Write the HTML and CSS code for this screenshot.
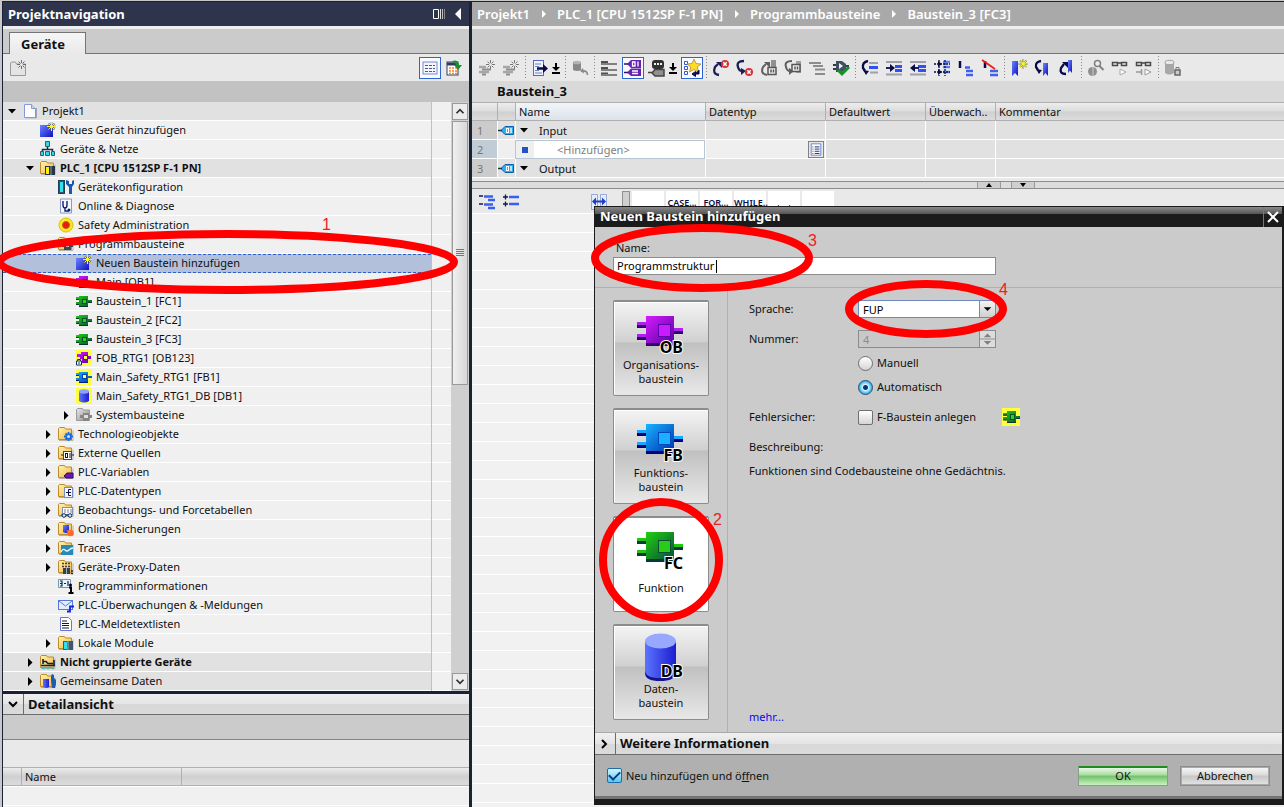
FILE: index.html
```html
<!DOCTYPE html>
<html lang="de">
<head>
<meta charset="utf-8">
<title>Projekt1 – Baustein_3 [FC3]</title>
<link rel="stylesheet" href="styles.css">
</head>
<body>
<svg class="sprite" aria-hidden="true">
  <defs>
    <linearGradient id="g-folder" x1="0" y1="0" x2="1" y2="1"><stop offset="0" stop-color="#fff3b0"/><stop offset="1" stop-color="#f0b848"/></linearGradient>
    <linearGradient id="g-blue" x1="0" y1="0" x2="1" y2="1"><stop offset="0" stop-color="#6a86ff"/><stop offset="1" stop-color="#1010c0"/></linearGradient>
    <linearGradient id="g-ob" x1="0" y1="0" x2="1" y2="1"><stop offset="0" stop-color="#d41cff"/><stop offset="1" stop-color="#5c00a0"/></linearGradient>
    <linearGradient id="g-fb" x1="0" y1="0" x2="1" y2="1"><stop offset="0" stop-color="#18b4ff"/><stop offset="1" stop-color="#0030b0"/></linearGradient>
    <linearGradient id="g-fc" x1="0" y1="0" x2="1" y2="1"><stop offset="0" stop-color="#20d010"/><stop offset="1" stop-color="#084c38"/></linearGradient>
    <linearGradient id="g-gray" x1="0" y1="0" x2="1" y2="1"><stop offset="0" stop-color="#e8e8e8"/><stop offset="1" stop-color="#8c8c8c"/></linearGradient>
    <linearGradient id="g-db" x1="0" y1="0" x2="1" y2="0"><stop offset="0" stop-color="#5c74ff"/><stop offset="1" stop-color="#1c1cd0"/></linearGradient>
  </defs>

  <symbol id="down" viewBox="0 0 16 16"><path d="M4 6h8l-4 4.500z"/></symbol>
  <symbol id="right" viewBox="0 0 16 16"><path d="M6 4l4.500 4.500L6 13z"/></symbol>
  <symbol id="folder" viewBox="0 0 16 16"><path d="M.5 13.500v-11l1-1h5l1 1.500h6v10.500z" fill="url(#g-folder)" stroke="#c08a28"/><path d="M1 14.500h14v-10" fill="none" stroke="#b8b0a0"/></symbol>
  <symbol id="star" viewBox="0 0 16 16"><path d="M11.500 0v9M7 4.500h9M8.500 1.500l6 6M14.500 1.500l-6 6" stroke="#505068" stroke-width="1.500"/><path d="M11.500 0v9M7 4.500h9M8.500 1.500l6 6M14.500 1.500l-6 6" stroke="#f8f820" stroke-width="1"/></symbol>
  <symbol id="page" viewBox="0 0 16 16"><path d="M3 14.500h11V5" fill="none" stroke="#8890b8" stroke-width="1.500"/><path d="M2.500 1.500h7l4 4v9h-11z" fill="#fbfcff" stroke="#8898dc"/><path d="M9.500 1.500v4h4" fill="#c8d4ff" stroke="#8898dc"/></symbol>
  <symbol id="new" viewBox="0 0 16 16"><rect y="3" width="13" height="12" fill="url(#g-blue)"/><use href="#star"/></symbol>
  <symbol id="net" viewBox="0 0 16 16"><path d="M7.500 5v4M2.500 11V8.500h10V11" fill="none" stroke="#14304c" stroke-width="1.500"/><g fill="#30d8e8" stroke="#385868"><path d="M5.500.5h4v5h-4zM.5 10.500h3v4h-3zM5.500 10.500h4v4h-4zM11.500 10.500h3v4h-3z"/></g></symbol>
  <symbol id="plc" viewBox="0 0 16 16"><use href="#folder"/><rect x="5" y="6" width="10" height="9" fill="#283448"/><rect x="6" y="7" width="3" height="7" fill="#fff000"/><path d="M11 6v9" stroke="#8898a8"/></symbol>
  <symbol id="cfg" viewBox="0 0 16 16"><rect x=".5" y="1.500" width="6" height="13" fill="#385068" stroke="#204050"/><rect x="2" y="3" width="3" height="10" fill="#30e0f0"/><path d="M8 1v4l3 3v7h3V8l2-3V1l-2 1v3h-3V2z" fill="#1858b0"/></symbol>
  <symbol id="diag" viewBox="0 0 16 16"><path d="M2.500 1h11v14h-11z" fill="#f5f8ff" stroke="#8898cc"/><path d="M5 3v4q0 3 2 3t2-3V3M7 10v3h4" fill="none" stroke="#10206c" stroke-width="1.400"/><circle cx="11" cy="12" r="1.500" fill="#10206c"/></symbol>
  <symbol id="safe" viewBox="0 0 16 16"><circle cx="8" cy="8" r="7" fill="#ffe820" stroke="#d8c010"/><circle cx="8" cy="8" r="3.500" fill="#e81c10" stroke="#c06010"/></symbol>
  <symbol id="prog" viewBox="0 0 16 16"><use href="#folder"/><path d="M4 8h2V6h7v2h2v3h-2v3H6v-3H4z" fill="#384858"/><rect x="8" y="8" width="3" height="3" fill="#c0c8d0"/></symbol>
  <symbol id="ob" viewBox="0 0 16 16"><path d="M0 4h3V2h9v5h4v3h-4v4H3v-2H0V9h3V7H0z" fill="url(#g-ob)"/><path d="M0 6.500h3M0 11.500h3M3 13.500h9" stroke="#2c0060"/><rect x="6.500" y="5.500" width="4" height="4" fill="#c838ff" stroke="#7000b0"/></symbol>
  <symbol id="fc" viewBox="0 0 16 16"><path d="M0 4h3V3h9v4h4v3h-4v4H3v-2H0V9h3V7H0z" fill="url(#g-fc)"/><path d="M0 6.500h3M0 11.500h3M3 13.500h9M12 9.500h4" stroke="#083828"/><rect x="6.500" y="6.500" width="4" height="4" fill="#28d818" stroke="#085030"/></symbol>
  <symbol id="fob" viewBox="0 0 16 16"><rect width="16" height="16" fill="#ffff40"/><path d="M1 4h4V2h7v4h3v3h-3v4H6V9H4V7H1z" fill="url(#g-ob)"/><rect x="7.500" y="5.500" width="4" height="4" fill="#ffff40" stroke="#7000b0"/><path d="M.5 11h5v4h-5z" fill="#fff" stroke="#103060"/><path d="M1.500 11V9.500h3V11M2 13h2" fill="none" stroke="#103060"/></symbol>
  <symbol id="ffb" viewBox="0 0 16 16"><rect width="16" height="16" fill="#ffff40"/><path d="M0 4h3V3h9v4h4v2h-4v5H3v-2H0V9h3V7H0z" fill="url(#g-fb)"/><path d="M0 6.500h3M0 11.500h3M3 13.500h9" stroke="#002080"/><rect x="6.500" y="5.500" width="4" height="4" fill="#ffff70" stroke="#0040b0"/></symbol>
  <symbol id="ffc" viewBox="0 0 18 18"><rect width="18" height="18" fill="#ffff40"/><path d="M1 5h4V3h9v5h4v3h-4v4H5v-3H1V9h4V8H1z" fill="url(#g-fc)"/><path d="M1 7h4M1 12h4M5 14.500h9M14 10.500h4" stroke="#083828"/><rect x="8.500" y="6.500" width="4" height="5" fill="#28d818" stroke="#085030"/></symbol>
  <symbol id="fdb" viewBox="0 0 16 16"><rect width="16" height="16" fill="#ffff40"/><path d="M3 3v10q5 3 10 0V3z" fill="url(#g-db)"/><ellipse cx="8" cy="3.500" rx="5" ry="2.200" fill="#8ca0ff"/></symbol>
  <symbol id="sys" viewBox="0 0 16 16"><path d="M.5 13.500v-11l1-1h5l1 1.500h6v10.500z" fill="url(#g-gray)" stroke="#9a9a9a"/><path d="M4 8h3V6h6v2h3v3h-3v3H7v-3H4z" fill="#858585"/><rect x="8" y="8" width="4" height="3" fill="#e0e0e0"/></symbol>
  <symbol id="tech" viewBox="0 0 16 16"><use href="#folder"/><path d="M10.500 6v9M6 10.500h9M7.500 7.500l6 6M13.500 7.500l-6 6" stroke="#1868d8" stroke-width="1.800"/><circle cx="10.500" cy="10.500" r="1.500" fill="#d0e4ff"/></symbol>
  <symbol id="src" viewBox="0 0 16 16"><use href="#folder"/><rect x="5.500" y="6.500" width="8" height="8" fill="#fff" stroke="#384870"/><path d="M3 10h2M14 10h2M12 8v5" stroke="#101838"/><rect x="7.500" y="8.500" width="2" height="4" fill="none" stroke="#101838"/></symbol>
  <symbol id="tag" viewBox="0 0 16 16"><use href="#folder"/><path d="M6 12l3-3h6v5H8z" fill="#6a18b0" stroke="#30086c"/></symbol>
  <symbol id="typ" viewBox="0 0 16 16"><use href="#folder"/><rect x="6.500" y="4.500" width="8" height="10" fill="#f4f6ff" stroke="#7888c8"/><path d="M8 9.500h2M13 6.500h-2.500v6H13M10 9.500h3" fill="none" stroke="#101838"/></symbol>
  <symbol id="watch" viewBox="0 0 16 16"><use href="#folder"/><rect x="4.500" y="5.500" width="10" height="7" fill="#fff" stroke="#8090b0"/><path d="M6 8h8M6 10h8" stroke="#707c94" stroke-dasharray="2 1"/><path d="M3 13h11" stroke="#142c60"/><circle cx="6" cy="13.500" r="1.800" fill="#dce8ff" stroke="#142c60"/><circle cx="12" cy="13.500" r="1.800" fill="#dce8ff" stroke="#142c60"/></symbol>
  <symbol id="save" viewBox="0 0 16 16"><use href="#folder"/><path d="M5 4v7q3 2 6 0V4z" fill="url(#g-blue)"/><circle cx="12.500" cy="12" r="3.300" fill="#ff6a20"/><path d="M8 9l4 1v2z" fill="#ff8c30"/></symbol>
  <symbol id="trace" viewBox="0 0 16 16"><use href="#folder"/><rect x="3" y="5" width="12" height="10" fill="#2888b8"/><path d="M3 12q2-4 4-2t4 0 4-2" fill="none" stroke="#e8fcff" stroke-width="1.300"/></symbol>
  <symbol id="proxy" viewBox="0 0 16 16"><use href="#folder"/><path d="M4 4.500h9M4 7.500h9" stroke="#404040" stroke-width="1.500" stroke-dasharray="2 1"/><path d="M5 9h7v6H5z" fill="#384048"/><path d="M8.500 9v6" stroke="#a0a8b0"/><path d="M13 12h2M13 14.500h2" stroke="#202830" stroke-width="1.500"/></symbol>
  <symbol id="info" viewBox="0 0 16 16"><path d="M.5 1.500h12v8H.5z" fill="#e8f4ff" stroke="#7898b0"/><path d="M2 3h2v5H2M6 5.500h2M10 3v5M2 5.500h2" fill="none" stroke="#142838" stroke-width="1.200"/><circle cx="12.500" cy="7" r="1.500"/><path d="M11 9.500h2v5.500M10.500 15h5" fill="none" stroke="#000" stroke-width="2"/></symbol>
  <symbol id="mail" viewBox="0 0 16 16"><rect x=".5" y="3.500" width="14" height="9" fill="#e4ecff" stroke="#5878d8"/><path d="M1 4l6.500 5L14 4" fill="none" stroke="#5878d8"/><path d="M9 14.500h3v-5h4" fill="none" stroke="#1020f0" stroke-width="1.800"/></symbol>
  <symbol id="text" viewBox="0 0 16 16"><path d="M2.500 1.500h8l3 3v10h-11z" fill="#fff" stroke="#6878d0"/><path d="M4 5h5M4 7.500h7M4 9.500h7M4 12h7" stroke="#101838"/></symbol>
  <symbol id="mod" viewBox="0 0 16 16"><use href="#folder"/><rect x="5" y="6" width="10" height="9" fill="#40586c"/><rect x="6" y="7" width="3" height="7" fill="#30e0f0"/><path d="M10 6v9" stroke="#a0b0b8"/></symbol>
  <symbol id="ungr" viewBox="0 0 16 16"><use href="#folder"/><path d="M3 5v5M14 6v5M3 7.500h3l2 2h5M1 11.500h14" fill="none" stroke="#102040" stroke-width="1.600"/><path d="M2 14h3M6.500 14h3M11 14h3" stroke="#50b8c8" stroke-width="2.500"/></symbol>
  <symbol id="shared" viewBox="0 0 16 16"><use href="#folder"/><path d="M3 6v8q3 2 6 0V6z" fill="url(#g-db)"/><path d="M11 3l1-2 2 1v3l2 2v4l-1 4h-3l-1-7z" fill="#1c5cb0"/></symbol>

  <symbol id="t-addrow" viewBox="0 0 18 18"><path d="M1 8h7M1 13h10" stroke="#a6a6a6" stroke-width="2.500"/><path d="M4 10.500h9M4 15.500h4" stroke="#8c8c8c" stroke-width="2.200"/><path d="M12.500 1v9M8 5.500h9M9.500 2.500l6 6M15.500 2.500l-6 6" stroke="#777"/><circle cx="12.500" cy="5.500" r="1.500" fill="#eee"/></symbol>
  <symbol id="t-newfolder" viewBox="0 0 18 18"><path d="M1.500 16.500V4l1-1h4l1 2h9v11.500z" fill="#e4e4e4" stroke="#9a9a9a"/><path d="M12.500 1v9M8 5.500h9M9.500 2.500l6 6M15.500 2.500l-6 6" stroke="#6a6a6a"/><circle cx="12.500" cy="5.500" r="1.500" fill="#eee"/></symbol>
  <symbol id="t-list" viewBox="0 0 18 18"><rect x="2" y="3" width="14" height="12" fill="#f4f6ff" stroke="#7888c8"/><path d="M4 6.500h10M4 9.500h10M4 12.500h10" stroke="#505878" stroke-dasharray="3 1"/></symbol>
  <symbol id="t-export" viewBox="0 0 18 18"><rect x="2" y="3" width="11" height="13" fill="#fff" stroke="#303c60"/><path d="M2 5h11" stroke="#303c60" stroke-width="3"/><path d="M4 9h8M4 12h8M4 14.500h8" stroke="#f08020" stroke-width="1.600" stroke-dasharray="2 1"/><path d="M7 2q6-2 7 4h3l-4 5-4-5h2q-1-3-4-4z" fill="#189030"/></symbol>
  <symbol id="t-goto" viewBox="0 0 18 18"><rect x="2.500" y="1.500" width="10" height="15" fill="#eef2ff" stroke="#5868c0"/><path d="M4 5h6M4 7.500h4M4 11.500h4M4 14h7" stroke="#7080c0"/><path d="M6 8.300h6V5l5 4.500-5 4.500v-3.200H6z" fill="#0a0a48"/></symbol>
  <symbol id="t-caret" viewBox="0 0 10 18"><path d="M3 4h2v4h3L4 12 0 8h3zM0 13h8v2H0z"/></symbol>
  <symbol id="t-dbundo" viewBox="0 0 18 18"><path d="M2 3v8q4 2 8 0V3z" fill="#888"/><ellipse cx="6" cy="3.500" rx="4" ry="1.800" fill="#b4b4b4"/><path d="M16.500 16q0-5-6-4" fill="none" stroke="#888" stroke-width="1.600"/><path d="M12 9l-3 3 4 2.500z" fill="#888"/></symbol>
  <symbol id="t-bars" viewBox="0 0 18 18"><path d="M1 3h7M1 9h7M1 14.500h7" stroke="#505050" stroke-width="2"/><path d="M1 5h16M1 11h16M1 16h16" stroke="#808080" stroke-width="2"/></symbol>
  <symbol id="t-tags" viewBox="0 0 18 18"><path d="M3 5l4-4h10v8H7zM3 13.500l4-4h10V17H7z" fill="#6820b0"/><path d="M0 5h4M0 13.500h4" stroke="#301060" stroke-width="1.500"/><path d="M8.500 3h2.500v4H8.500zM14 2.500v5" fill="none" stroke="#fff" stroke-width="1.300"/><path d="M8 12h6M8 14.500h6" stroke="#fff" stroke-width="1.500"/></symbol>
  <symbol id="t-comment" viewBox="0 0 18 18"><rect x="4" y="1" width="12" height="9" rx="3" fill="#303030"/><path d="M6 5h2M9 5h2M12 5h2" stroke="#eee" stroke-width="2"/><path d="M4 14l3-3.500h9V17H7zM0 13.500h4" fill="#909090" stroke="#444" stroke-width="1.500"/></symbol>
  <symbol id="t-fav" viewBox="0 0 18 18"><path d="M1.500 2.500h3v3h-3zM1.500 7.500h3v3h-3zM1.500 12.500h3v3h-3z" fill="#fff" stroke="#3858c8"/><path d="M11 0l2 4.500 5 .5-3.700 3 1.200 5-4.500-2.500L6.500 13l1.200-5L4 5l5-.5z" fill="#ffdc28" stroke="#a08030" stroke-width=".7"/><path d="M16 11v4h-5M12.500 12.500L9 15l3.500 2.500z" fill="#0a0a48" stroke="#0a0a48"/></symbol>
  <symbol id="t-preverr" viewBox="0 0 18 18"><path d="M7 16q-7-1-4-8l3-3" fill="none" stroke="#182058" stroke-width="2.300"/><path d="M4 3h6v6z" fill="#182058"/><circle cx="13" cy="5" r="4" fill="#d83038"/><path d="M11.300 3.300l3.400 3.400M14.700 3.300l-3.400 3.400" stroke="#fff" stroke-width="1.500"/></symbol>
  <symbol id="t-nexterr" viewBox="0 0 18 18"><path d="M8 2Q0 2 2 8q1 4 4 4" fill="none" stroke="#182058" stroke-width="2.300"/><path d="M5 9l5 3-5 4z" fill="#182058"/><circle cx="13" cy="13" r="4" fill="#d83038"/><path d="M11.300 11.300l3.400 3.400M14.700 11.300l-3.400 3.400" stroke="#fff" stroke-width="1.500"/></symbol>
  <symbol id="t-prevg" viewBox="0 0 18 18"><path d="M7 16q-7-1-4-8l3-3" fill="none" stroke="#606060" stroke-width="2"/><path d="M4 3h6v6z" fill="#606060"/><path d="M11 1h5v8h-5z" fill="#909090"/><path d="M8 8.500h8v7H8zM11 10.500v3M13.500 10.500v3" fill="#eee" stroke="#555" stroke-width="1.500"/></symbol>
  <symbol id="t-nextg" viewBox="0 0 18 18"><path d="M8 2Q0 2 2 8q1 4 4 4" fill="none" stroke="#606060" stroke-width="2"/><path d="M5 9l5 3-5 4z" fill="#606060"/><path d="M12 2h5v12h-5z" fill="#a0a0a0"/><path d="M8 5.500h8v7H8zM11 7.500v3M13.500 7.500v3" fill="#eee" stroke="#555" stroke-width="1.500"/></symbol>
  <symbol id="t-lines" viewBox="0 0 18 18"><path d="M1 4h12M5 7h10M7 10.500h10M7 15h10" stroke="#8c8c8c" stroke-width="2.200"/></symbol>
  <symbol id="t-check" viewBox="0 0 18 18"><path d="M1 6h3M1 10h3M13 7h4" stroke="#303c48" stroke-width="2"/><path d="M4 2h6l4 3v5l-4 3H4z" fill="#405060"/><path d="M7 4l4 3-4 3z" fill="#e8f0f8"/><path d="M6 11l4 4 7-7" fill="none" stroke="#189028" stroke-width="3"/></symbol>
  <symbol id="t-jump" viewBox="0 0 18 18"><path d="M7 2Q1 3 2 9l2 3" fill="none" stroke="#0a0a48" stroke-width="2.300"/><path d="M2 11l6 1-3 4z" fill="#0a0a48"/><path d="M8 4h9M9 13.500h8" stroke="#a0a0a8" stroke-width="2"/><path d="M8 8.500h9" stroke="#3050f0" stroke-width="3"/></symbol>
  <symbol id="t-in" viewBox="0 0 18 18"><path d="M1 3h16M1 15.500h16" stroke="#a0a0a8" stroke-width="2"/><path d="M10 7.500h7M10 11.500h7" stroke="#3050f0" stroke-width="2.800"/><path d="M1 9h5" stroke="#0a0a48" stroke-width="1.800"/><path d="M5 5l5 4-5 4z" fill="#0a0a48"/></symbol>
  <symbol id="t-out" viewBox="0 0 18 18"><path d="M1 3h16M1 15.500h16" stroke="#a0a0a8" stroke-width="2"/><path d="M9 7.500h8M9 11.500h8" stroke="#3050f0" stroke-width="2.800"/><path d="M5 9h5" stroke="#0a0a48" stroke-width="1.800"/><path d="M6 5L1 9l5 4z" fill="#0a0a48"/></symbol>
  <symbol id="t-align" viewBox="0 0 18 18"><path d="M10 3h7M10 8h7M10 13h7" stroke="#6080f0" stroke-width="2.500"/><path d="M1 5h16M1 13h16M6 1v16M12 1v16" stroke="#0a0a48" stroke-width="1.300" stroke-dasharray="2 1"/><path d="M5 2l4 3-4 3zM5 10l4 3-4 3z" fill="#0a0a48"/></symbol>
  <symbol id="t-mark" viewBox="0 0 18 18"><path d="M3 2v7" stroke="#0a0a48" stroke-width="2.500"/><path d="M8 8.500h5M9 12h7M9 16h7" stroke="#4060e8" stroke-width="2.500"/></symbol>
  <symbol id="t-unmark" viewBox="0 0 18 18"><path d="M4 2v7" stroke="#0a0a48" stroke-width="2.500"/><path d="M9 12h8M9 16h8" stroke="#4060e8" stroke-width="2.500"/><path d="M1 1l13 9" stroke="#e82018" stroke-width="1.800"/></symbol>
  <symbol id="t-bmnew" viewBox="0 0 18 18"><path d="M2 2h6v15l-3-3-3 3z" fill="url(#g-blue)"/><use href="#star" x="1" width="17" height="17"/></symbol>
  <symbol id="t-bmnext" viewBox="0 0 18 18"><path d="M7 2Q1 3 2 8l2 3" fill="none" stroke="#0a0a48" stroke-width="2.300"/><path d="M2 10l6 1-3 4z" fill="#0a0a48"/><path d="M9 4h5v13l-2.500-3L9 17z" fill="url(#g-blue)"/></symbol>
  <symbol id="t-bmprev" viewBox="0 0 18 18"><path d="M8 15q-7 0-5-6l3-4" fill="none" stroke="#0a0a48" stroke-width="2.300"/><path d="M4 3h6v6z" fill="#0a0a48"/><path d="M10 1h4v13l-2-2.500-2 2.500z" fill="url(#g-blue)"/></symbol>
  <symbol id="t-find" viewBox="0 0 18 18"><circle cx="5.500" cy="12.500" r="4.500" fill="#909090"/><path d="M6 8v9" stroke="#ccc"/><circle cx="10.500" cy="4.500" r="3" fill="#eee" stroke="#808080" stroke-width="1.500"/><path d="M12.500 7l4 4" stroke="#808080" stroke-width="2"/></symbol>
  <symbol id="t-glass" viewBox="0 0 18 18"><path d="M1.500 3.500h5v3h-5zM10.500 3.500h5v3h-5zM6.500 4h4" fill="none" stroke="#484848" stroke-width="1.500"/><path d="M9 10l6 3-6 3z" fill="#fff" stroke="#aaa"/></symbol>
  <symbol id="t-glass2" viewBox="0 0 18 18"><path d="M1.500 3.500h5v3h-5zM10.500 3.500h5v3h-5zM6.500 4h4" fill="none" stroke="#484848" stroke-width="1.500"/><path d="M1 13h6M6.500 10v6" stroke="#999" stroke-width="1.500"/><path d="M10 10l6 3-6 3z" fill="#fff" stroke="#999"/></symbol>
  <symbol id="t-dblock" viewBox="0 0 18 18"><path d="M1 3v11q4.500 3 9 0V3z" fill="#a8a8a8"/><ellipse cx="5.500" cy="3.500" rx="4.500" ry="2.200" fill="#e8e8e8" stroke="#999"/><path d="M11 11h5v5h-5z" fill="#ccc" stroke="#666" stroke-width="1.500"/><path d="M12 10V8.500h3V10" fill="none" stroke="#777"/></symbol>
  <symbol id="t-tree" viewBox="0 0 18 18"><path d="M1 3h4M1 11h4" stroke="#101848" stroke-width="1.300"/><path d="M6 3.500h9M10 7h7M6 11.500h9M10 15h7" stroke="#3860f0" stroke-width="2.500"/></symbol>
  <symbol id="t-plus" viewBox="0 0 18 18"><path d="M1 4h5M3.500 1.500v5M1 11h5M3.500 8.500v5" stroke="#101848" stroke-width="1.300"/><path d="M7 4h10M7 11h10" stroke="#3860f0" stroke-width="2.500"/></symbol>
  <symbol id="t-split" viewBox="0 0 18 18"><path d="M1.500 1.500h6v15h-6zM10.500 1.500h6v15h-6z" fill="#e4ecff" stroke="#98a8d8"/><path d="M2 8.500l4-4v3h6v-3l4 4-4 4v-3H6v3z" fill="#1c40c8"/></symbol>
  <symbol id="var" viewBox="0 0 16 16"><path d="M3 8.500L7 4.500h8.500v8H7z" fill="#28b0f0" stroke="#0860b0"/><path d="M0 8.500h4" stroke="#203050" stroke-width="1.500"/><rect x="8.500" y="6.500" width="2" height="4" fill="none" stroke="#fff"/><path d="M13 6v5" stroke="#fff" stroke-width="1.300"/></symbol>
</svg>

<div class="app">
  <aside class="nav">
    <header class="nav-head">
      <h1>Projektnavigation</h1>
      <svg class="head-icons" viewBox="0 0 30 14" width="30" height="14"><path d="M.5 2.500h5v9h-5z" fill="none" stroke="#fff"/><path d="M7.500 2v10" stroke="#ddd"/><path d="M9.500 2v10" stroke="#bbb"/><path d="M11.500 2v10" stroke="#888"/><path d="M28 1v12l-6-6z" fill="#fff"/></svg>
    </header>
    <div class="tabs"><button class="tab" type="button">Geräte</button></div>
    <div class="nav-tools">
      <button type="button" class="tool" aria-label="Neuer Ordner"><svg><use href="#t-newfolder"/></svg></button>
      <button type="button" class="tool boxed push" aria-label="Liste"><svg><use href="#t-list"/></svg></button>
      <button type="button" class="tool" aria-label="Exportieren"><svg><use href="#t-export"/></svg></button>
    </div>
    <div class="band"></div>
    <div class="tree-wrap">
      <ul class="tree">
        <li class="l0 dark"><svg><use href="#down"/></svg><svg><use href="#page"/></svg><span>Projekt1</span></li>
        <li class="l1"><i></i><svg><use href="#new"/></svg><span>Neues Gerät hinzufügen</span></li>
        <li class="l1"><i></i><svg><use href="#net"/></svg><span>Geräte &amp; Netze</span></li>
        <li class="l1 dark bold"><svg><use href="#down"/></svg><svg><use href="#plc"/></svg><span>PLC_1 [CPU 1512SP F-1 PN]</span></li>
        <li class="l2"><i></i><svg><use href="#cfg"/></svg><span>Gerätekonfiguration</span></li>
        <li class="l2"><i></i><svg><use href="#diag"/></svg><span>Online &amp; Diagnose</span></li>
        <li class="l2"><i></i><svg><use href="#safe"/></svg><span>Safety Administration</span></li>
        <li class="l2"><svg><use href="#down"/></svg><svg><use href="#prog"/></svg><span>Programmbausteine</span></li>
        <li class="l3 sel"><i></i><svg><use href="#new"/></svg><span>Neuen Baustein hinzufügen</span></li>
        <li class="l3"><i></i><svg><use href="#ob"/></svg><span>Main [OB1]</span></li>
        <li class="l3"><i></i><svg><use href="#fc"/></svg><span>Baustein_1 [FC1]</span></li>
        <li class="l3"><i></i><svg><use href="#fc"/></svg><span>Baustein_2 [FC2]</span></li>
        <li class="l3"><i></i><svg><use href="#fc"/></svg><span>Baustein_3 [FC3]</span></li>
        <li class="l3"><i></i><svg><use href="#fob"/></svg><span>FOB_RTG1 [OB123]</span></li>
        <li class="l3"><i></i><svg><use href="#ffb"/></svg><span>Main_Safety_RTG1 [FB1]</span></li>
        <li class="l3"><i></i><svg><use href="#fdb"/></svg><span>Main_Safety_RTG1_DB [DB1]</span></li>
        <li class="l3"><svg><use href="#right"/></svg><svg><use href="#sys"/></svg><span>Systembausteine</span></li>
        <li class="l2"><svg><use href="#right"/></svg><svg><use href="#tech"/></svg><span>Technologieobjekte</span></li>
        <li class="l2"><svg><use href="#right"/></svg><svg><use href="#src"/></svg><span>Externe Quellen</span></li>
        <li class="l2"><svg><use href="#right"/></svg><svg><use href="#tag"/></svg><span>PLC-Variablen</span></li>
        <li class="l2"><svg><use href="#right"/></svg><svg><use href="#typ"/></svg><span>PLC-Datentypen</span></li>
        <li class="l2"><svg><use href="#right"/></svg><svg><use href="#watch"/></svg><span>Beobachtungs- und Forcetabellen</span></li>
        <li class="l2"><svg><use href="#right"/></svg><svg><use href="#save"/></svg><span>Online-Sicherungen</span></li>
        <li class="l2"><svg><use href="#right"/></svg><svg><use href="#trace"/></svg><span>Traces</span></li>
        <li class="l2"><svg><use href="#right"/></svg><svg><use href="#proxy"/></svg><span>Geräte-Proxy-Daten</span></li>
        <li class="l2"><i></i><svg><use href="#info"/></svg><span>Programminformationen</span></li>
        <li class="l2"><i></i><svg><use href="#mail"/></svg><span>PLC-Überwachungen &amp; -Meldungen</span></li>
        <li class="l2"><i></i><svg><use href="#text"/></svg><span>PLC-Meldetextlisten</span></li>
        <li class="l2"><svg><use href="#right"/></svg><svg><use href="#mod"/></svg><span>Lokale Module</span></li>
        <li class="l1 dark bold"><svg><use href="#right"/></svg><svg><use href="#ungr"/></svg><span>Nicht gruppierte Geräte</span></li>
        <li class="l1 dark"><svg><use href="#right"/></svg><svg><use href="#shared"/></svg><span>Gemeinsame Daten</span></li>
      </ul>
      <div class="status-col"></div>
      <div class="scroll">
        <button type="button" aria-label="Nach oben"><svg viewBox="0 0 16 16"><path d="M4 10l4-4 4 4"/></svg></button>
        <div class="track"><div class="thumb"></div></div>
        <button type="button" aria-label="Nach unten"><svg viewBox="0 0 16 16"><path d="M4 6l4 4 4-4"/></svg></button>
      </div>
    </div>
    <section class="detail">
      <div class="fold"><svg viewBox="0 0 20 20"><path d="M6 8l4 4 4-4"/></svg><h2>Detailansicht</h2></div>
      <div class="detail-band"></div>
      <div class="detail-tools"></div>
      <div class="detail-cols"><span></span><span>Name</span><span></span></div>
      <div class="detail-rows"></div>
    </section>
  </aside>

  <main class="main">
    <nav class="crumbs"><span>Projekt1</span><b></b><span>PLC_1 [CPU 1512SP F-1 PN]</span><b></b><span>Programmbausteine</span><b></b><span>Baustein_3 [FC3]</span></nav>
    <div class="main-band"></div>
    <div class="toolbar">
      <button type="button" class="tool" aria-label="Zeile einfügen"><svg><use href="#t-addrow"/></svg></button>
      <button type="button" class="tool" aria-label="Zeile hinzufügen"><svg><use href="#t-addrow"/></svg></button>
      <i class="sep"></i>
      <button type="button" class="tool" aria-label="Gehe zu"><svg><use href="#t-goto"/></svg></button>
      <svg class="caret"><use href="#t-caret"/></svg>
      <i class="sep"></i>
      <button type="button" class="tool" aria-label="Startwerte"><svg><use href="#t-dbundo"/></svg></button>
      <i class="sep"></i>
      <button type="button" class="tool" aria-label="Netzwerke"><svg><use href="#t-bars"/></svg></button>
      <button type="button" class="tool boxed" aria-label="Operanden"><svg><use href="#t-tags"/></svg></button>
      <button type="button" class="tool" aria-label="Kommentare"><svg><use href="#t-comment"/></svg></button>
      <svg class="caret"><use href="#t-caret"/></svg>
      <button type="button" class="tool boxed" aria-label="Favoriten"><svg><use href="#t-fav"/></svg></button>
      <i class="sep"></i>
      <button type="button" class="tool" aria-label="Voriger Fehler"><svg><use href="#t-preverr"/></svg></button>
      <button type="button" class="tool" aria-label="Nächster Fehler"><svg><use href="#t-nexterr"/></svg></button>
      <button type="button" class="tool" aria-label="Voriger Unterschied"><svg><use href="#t-prevg"/></svg></button>
      <button type="button" class="tool" aria-label="Nächster Unterschied"><svg><use href="#t-nextg"/></svg></button>
      <button type="button" class="tool" aria-label="Aktualisieren"><svg><use href="#t-lines"/></svg></button>
      <button type="button" class="tool" aria-label="Prüfen"><svg><use href="#t-check"/></svg></button>
      <i class="sep"></i>
      <button type="button" class="tool" aria-label="Zu Zeile"><svg><use href="#t-jump"/></svg></button>
      <button type="button" class="tool" aria-label="Einrücken"><svg><use href="#t-in"/></svg></button>
      <button type="button" class="tool" aria-label="Ausrücken"><svg><use href="#t-out"/></svg></button>
      <button type="button" class="tool" aria-label="Formatieren"><svg><use href="#t-align"/></svg></button>
      <button type="button" class="tool" aria-label="Auskommentieren"><svg><use href="#t-mark"/></svg></button>
      <button type="button" class="tool" aria-label="Kommentar entfernen"><svg><use href="#t-unmark"/></svg></button>
      <i class="sep"></i>
      <button type="button" class="tool" aria-label="Lesezeichen"><svg><use href="#t-bmnew"/></svg></button>
      <button type="button" class="tool" aria-label="Nächstes Lesezeichen"><svg><use href="#t-bmnext"/></svg></button>
      <button type="button" class="tool" aria-label="Voriges Lesezeichen"><svg><use href="#t-bmprev"/></svg></button>
      <i class="sep"></i>
      <button type="button" class="tool" aria-label="Aufrufumgebung"><svg><use href="#t-find"/></svg></button>
      <button type="button" class="tool" aria-label="Beobachten"><svg><use href="#t-glass"/></svg></button>
      <button type="button" class="tool" aria-label="Beobachten ab Auswahl"><svg><use href="#t-glass2"/></svg></button>
      <i class="sep"></i>
      <button type="button" class="tool" aria-label="Datenbaustein sperren"><svg><use href="#t-dblock"/></svg></button>
    </div>
    <h2 class="block-title">Baustein_3</h2>
    <table class="iface">
      <colgroup><col class="c-num"><col class="c-tag"><col class="c-name"><col class="c-type"><col class="c-def"><col class="c-mon"><col></colgroup>
      <thead><tr><th></th><th></th><th class="active">Name</th><th>Datentyp</th><th>Defaultwert</th><th>Überwach..</th><th>Kommentar</th></tr></thead>
      <tbody>
        <tr><td class="num">1</td><td class="ic"><svg><use href="#var"/></svg></td><td><div class="cell"><svg><use href="#down"/></svg>Input</div></td><td></td><td></td><td></td><td></td></tr>
        <tr><td class="num on">2</td><td class="light"></td><td class="edit"><div class="cell"><i class="dot"></i><span>&lt;Hinzufügen&gt;</span></div></td><td class="light pick"><button type="button" aria-label="Datentyp wählen"><svg viewBox="0 0 16 16"><path d="M2.500 1.500h11v13h-11z" fill="#fff" stroke="#5878d8"/><path d="M4 5h1M4 7.500h1M4 10h1M4 12.500h1M6.500 5H12M6.500 7.500H12M6.500 10H12M6.500 12.500H12" stroke="#101848"/></svg></button></td><td></td><td></td><td></td></tr>
        <tr><td class="num">3</td><td class="ic"><svg><use href="#var"/></svg></td><td><div class="cell"><svg><use href="#down"/></svg>Output</div></td><td></td><td></td><td></td><td></td></tr>
      </tbody>
    </table>
    <div class="splitter"><span><svg viewBox="0 0 6 4"><path d="M3 0l3 4H0z"/></svg></span><span><svg viewBox="0 0 6 4"><path d="M0 0h6L3 4z"/></svg></span></div>
    <div class="favs">
      <button type="button" class="tool" aria-label="Netzwerke"><svg><use href="#t-tree"/></svg></button>
      <button type="button" class="tool" aria-label="Aufklappen"><svg><use href="#t-plus"/></svg></button>
      <button type="button" class="tool push" aria-label="Teilen"><svg><use href="#t-split"/></svg></button>
      <i class="grip"></i>
      <span class="fav low">IF...</span><span class="fav">CASE...</span><span class="fav">FOR...</span><span class="fav">WHILE..</span><span class="fav low">(*...*)</span><span class="fav low">REGION</span>
    </div>
    <div class="networks"></div>
  </main>
</div>

<section class="dialog" role="dialog" aria-labelledby="dlg-title">
  <header class="dlg-head"><h2 id="dlg-title">Neuen Baustein hinzufügen</h2><button type="button" aria-label="Schließen"><svg viewBox="0 0 16 16"><path d="M3 3l10 10M13 3L3 13"/></svg></button></header>
  <div class="dlg-name">
    <label for="name">Name:</label>
    <div class="name-box"><input id="name" type="text" value="Programmstruktur"><i></i></div>
  </div>
  <div class="dlg-main">
    <div class="kinds">
      <button type="button" class="kind"><svg viewBox="0 0 48 44"><path d="M0 8h9v4H0zM0 20h9v4H0zM37 14h9v3h-9z" fill="#b020f0"/><path d="M0 11h9v3H0zM0 23h9v3H0zM37 17h9v3h-9z" fill="#300070"/><rect x="9" y="2" width="28" height="28" fill="url(#g-ob)"/><rect x="9" y="29" width="28" height="3" fill="#300070"/><rect x="21.500" y="10.500" width="12" height="12" fill="#c81cff" stroke="#6000a8"/><text x="46" y="39">OB</text></svg><span>Organisations-<br>baustein</span></button>
      <button type="button" class="kind"><svg viewBox="0 0 48 44"><path d="M0 8h9v4H0zM0 20h9v4H0zM37 14h9v3h-9z" fill="#18a8ff"/><path d="M0 11h9v3H0zM0 23h9v3H0zM37 17h9v3h-9z" fill="#000078"/><rect x="9" y="2" width="28" height="28" fill="url(#g-fb)"/><rect x="9" y="29" width="28" height="3" fill="#000078"/><rect x="21.500" y="10.500" width="12" height="12" fill="#18b0ff" stroke="#0048c0"/><text x="46" y="39">FB</text></svg><span>Funktions-<br>baustein</span></button>
      <button type="button" class="kind picked"><svg viewBox="0 0 48 44"><path d="M0 8h9v4H0zM0 20h9v4H0zM37 14h9v3h-9z" fill="#20c810"/><path d="M0 11h9v3H0zM0 23h9v3H0zM37 17h9v3h-9z" fill="#083838"/><rect x="9" y="2" width="28" height="28" fill="url(#g-fc)"/><rect x="9" y="29" width="28" height="3" fill="#083838"/><rect x="21.500" y="10.500" width="12" height="12" fill="#28cc18" stroke="#085030"/><text x="46" y="39">FC</text></svg><span>Funktion</span></button>
      <button type="button" class="kind"><svg viewBox="0 0 48 44"><path d="M8 4v31q0 8 15 8t16-8V4z" fill="#141490"/><path d="M8 4v28q0 8 15 8t16-8V4z" fill="url(#g-db)"/><ellipse cx="23.500" cy="3" rx="15.500" ry="7.500" fill="#98a8ff"/><text x="46" y="39">DB</text></svg><span>Daten-<br>baustein</span></button>
    </div>
    <form class="form">
      <div class="row"><label for="lang">Sprache:</label><div class="combo"><select id="lang"><option>FUP</option></select><svg viewBox="0 0 16 16"><path d="M4 6h8l-4 4z"/></svg></div></div>
      <div class="row"><label for="num">Nummer:</label><div class="spin"><input id="num" type="text" value="4" disabled><svg viewBox="0 0 16 16"><path d="M0 8h16" stroke="#8c8c8c"/><path d="M4 6l4-4 4 4zM4 10h8l-4 4z" fill="#808080"/></svg></div></div>
      <div class="row tight"><span></span><input type="radio" name="mode" id="man"><label for="man">Manuell</label></div>
      <div class="row tight"><span></span><input type="radio" name="mode" id="auto" checked><label for="auto">Automatisch</label></div>
      <div class="row"><span>Fehlersicher:</span><input type="checkbox" id="fsafe"><label for="fsafe">F-Baustein anlegen</label><svg class="fs"><use href="#ffc"/></svg></div>
      <div class="row">Beschreibung:</div>
      <div class="row tight">Funktionen sind Codebausteine ohne Gedächtnis.</div>
      <a class="more" href="#more">mehr...</a>
    </form>
  </div>
  <div class="fold more-info"><svg viewBox="0 0 20 20"><path d="M7 6l4 4-4 4"/></svg><h2>Weitere Informationen</h2></div>
  <footer class="dlg-foot">
    <input type="checkbox" id="open" checked><label for="open">Neu hinzufügen und ö<u>f</u>fnen</label>
    <button type="button" class="btn ok">OK</button><button type="button" class="btn">Abbrechen</button>
  </footer>
</section>

<svg class="marks">
  <ellipse cx="227" cy="262" rx="227" ry="28"/>
  <circle cx="661" cy="560" r="58"/>
  <ellipse cx="702" cy="258" rx="107" ry="30"/>
  <ellipse cx="926" cy="309" rx="77" ry="25"/>
  <text x="322" y="230">1</text><text x="713" y="525">2</text><text x="808" y="246">3</text><text x="999" y="295">4</text>
</svg>
</body>
</html>
```
FILE: styles.css
```css
* { box-sizing: border-box; }
html, body { height: 100%; }
body { margin: 0; overflow: hidden; position: relative; background: #c8c8c8; color: #101010; font: 11px/18px "Noto Sans", "Open Sans", sans-serif; }
h1, h2, ul { margin: 0; padding: 0; font-size: 13px; font-weight: 600; }
button { font: inherit; color: inherit; padding: 0; margin: 0; border: 0; background: none; }
svg { display: block; flex: none; }
.sprite { position: absolute; width: 0; height: 0; }

.app { display: flex; min-height: 100vh; margin-left: 2px; padding-top: 1px; }
.nav { width: 470px; flex: none; display: flex; flex-direction: column; border: 1px solid #1c2236; border-width: 1px 3px 0 1px; background: #efefef; }
.main { flex: 1; min-width: 0; display: flex; flex-direction: column; border-top: 1px solid #1c2236; background: #e9e9e9; }

.nav-head { height: 24px; display: flex; align-items: center; justify-content: space-between; padding: 0 6px 0 5px; background: #2d344c; color: #fff; }
.nav-head h1, .tab, .crumbs { font-size: 13px; font-weight: 700; }
.tabs { height: 28px; padding: 3px 0 0 6px; border-top: 3px solid #efefef; border-bottom: 1px solid #747474; background: #cbcbcb; }
.tab { display: block; width: 77px; height: 22px; padding-right: 9px; border: 1px solid #747474; border-bottom: 0; background: linear-gradient(#f6f6f6, #e9e9e9); }
.nav-tools, .toolbar { height: 27px; display: flex; align-items: center; background: #e9e9e9; }
.nav-tools { padding: 0 3px; }
.tool { width: 24px; height: 22px; flex: none; display: grid; place-items: center; }
.tool svg { width: 18px; height: 18px; }
.boxed { width: 22px; margin: 0 1px; border: 1px solid #2c64d0; background: #f8faff; }
.push { margin-left: auto; }
.band { height: 21px; background: #c2c2c2; }

.tree-wrap { display: flex; }
.tree { flex: 1; list-style: none; font-size: 11px; font-weight: 400; }
.tree li { height: 19px; display: flex; align-items: center; background: #f0f0f0; border-bottom: 1px solid #fff; white-space: nowrap; }
.tree svg { width: 16px; height: 16px; }
.tree svg:first-child, .tree i { width: 16px; margin-right: 2px; flex: none; }
.tree span { margin-left: 4px; }
.tree .l0 { padding-left: 1px; }
.tree .l1 { padding-left: 19px; }
.tree .l2 { padding-left: 37px; }
.tree .l3 { padding-left: 55px; }
.tree .dark { background: #e1e1e1; }
.tree .bold { font-weight: 700; }
.tree .sel { padding-bottom: 1px; background: #b2c0dc; border-top: 1px dashed #2c60c8; border-bottom: 1px dashed #2c60c8; }
.status-col { width: 20px; border-left: 1px solid #c0c0c0; background: repeating-linear-gradient(#f0f0f0 0 18px, #fff 18px 19px); }
.scroll { width: 18px; display: flex; flex-direction: column; padding: 1px; background: #cfcfcf; }
.scroll button { height: 17px; border: 1px solid #9a9a9a; background: #ececec; }
.scroll svg { width: 14px; height: 15px; }
.scroll path, .fold path { fill: none; stroke: #303030; stroke-width: 2; }
.fold path { stroke: #000; }
.track { flex: 1; padding: 1px 0; }
.thumb { height: 48%; border: 1px solid #9a9a9a; background: linear-gradient(90deg, #f0f0f0, #d8d8d8); display: grid; place-items: center; }
.thumb::after { content: ""; width: 8px; height: 8px; background: repeating-linear-gradient(#777 0 1px, transparent 1px 2px); }

.detail { flex: 1; display: flex; flex-direction: column; border-top: 3px solid #1c2236; }
.fold { height: 21px; flex: none; display: flex; align-items: center; border-bottom: 1px solid #6c6c6c; background: linear-gradient(#f0f0f0 0, #e4e4e4 50%, #d8d8d8 51%, #dadada); }
.fold svg { width: 20px; height: 20px; }
.fold h2 { height: 100%; padding-left: 4px; border-left: 1px solid #6c6c6c; line-height: 20px; font-weight: 700; }
.detail-band { height: 25px; border-bottom: 1px solid #848484; background: #cbcbcb; }
.detail-tools { height: 27px; background: #e9e9e9; }
.detail-cols { height: 19px; display: flex; border: 1px solid #b0b0b0; border-width: 1px 0; background: linear-gradient(#ececec, #d0d0d0 50%, #dcdcdc); }
.detail-cols span { flex: 1; padding-left: 3px; border-left: 1px solid #b0b0b0; }
.detail-cols span:first-child { flex: none; width: 18px; border: 0; }
.detail-cols span:nth-child(2) { flex: none; width: 160px; }
.detail-rows { flex: 1; background: repeating-linear-gradient(#fff 0 1px, #f0f0f0 1px 19px); }

.crumbs { height: 24px; display: flex; align-items: center; padding-left: 5px; background: #a9a9a9; color: #fff; font-weight: 600; white-space: nowrap; }
.crumbs b { margin: 0 11px 0 12px; border: 4px solid transparent; border-left-color: #fff; border-right: 0; }
.main-band { height: 28px; border-top: 3px solid #efefef; border-bottom: 1px solid #747474; background: #cbcbcb; }
.toolbar { padding-left: 3px; }
.sep { width: 1px; height: 23px; margin: 0 2px; flex: none; background: repeating-linear-gradient(#888 0 1px, transparent 1px 3px); }
.caret { width: 10px; height: 18px; margin-right: 1px; }
.block-title { height: 21px; padding-left: 25px; line-height: 20px; font-weight: 700; background: #d9d9d9; }
.iface { width: 100%; table-layout: fixed; border-collapse: separate; border-spacing: 0; line-height: 17px; }
.c-num { width: 25px; } .c-tag { width: 18px; } .c-name { width: 190px; } .c-type { width: 120px; } .c-def { width: 100px; } .c-mon { width: 70px; }
.iface th { height: 19px; padding: 0 0 0 3px; text-align: left; font-weight: 400; border: 1px solid #b0b0b0; border-width: 1px 0 1px 1px; background: linear-gradient(#ededed, #dcdcdc 48%, #d0d0d0 52%, #dcdcdc); }
.iface th.active { background: linear-gradient(#f2f5f8, #dbe3ea); }
.iface td { height: 19px; padding: 0; background: #e1e1e1; border-left: 1px solid #fff; border-bottom: 1px solid #fff; }
.iface td:first-child, .iface th:first-child { border-left: 0; }
.iface .num { padding-left: 5px; background: #cbcbcb; color: #777; }
.iface .num.on { background: #c0ccd6; }
.iface .light { background: #efefef; }
.iface .edit { background: #fff; border: 1px solid #b8c6d4; color: #808080; }
.cell { display: flex; align-items: center; height: 17px; }
.cell svg { width: 16px; height: 16px; margin: 0 7px 0 0; }
.ic svg { width: 16px; height: 16px; margin: 0; }
.dot { width: 18px; height: 17px; display: grid; place-items: center; background: #efefef; }
.dot::after { content: ""; width: 6px; height: 6px; background: #2450c8; }
.cell span { margin-left: 23px; }
.pick button { display: block; width: 16px; height: 17px; margin-left: auto; margin-right: 1px; border: 1px solid #808080; background: #e8e8e8; }
.pick svg { width: 14px; height: 15px; }
.splitter { height: 8px; margin-top: 3px; display: flex; justify-content: flex-start; gap: 10px; padding-left: 505px; border: 1px solid #8c8c8c; border-width: 1px 0; background: #dcdcdc; }
.splitter span { width: 24px; display: grid; place-items: center; border: 1px solid #9a9a9a; border-width: 0 1px; background: #cfcfcf; }
.splitter svg { width: 6px; height: 4px; }
.favs { height: 24px; display: flex; align-items: flex-start; padding: 2px 0 0 3px; }
.favs .push { margin-left: 64px; }
.grip { width: 8px; height: 22px; margin: 0 2px 0 11px; border: 1px solid #909090; background: #d0d0d0; }
.fav { width: 32px; height: 28px; margin-right: 2px; padding-top: 3px; background: #fff; color: #0a0a48; font-size: 9px; font-weight: 600; line-height: 18px; text-align: center; white-space: nowrap; }
.fav.low { padding-top: 9px; font-size: 8px; }
.networks { flex: 1; background: repeating-linear-gradient(#fff 0 1px, #f1f1f2 1px 19px); }

.dialog { position: absolute; left: 594px; right: 0; top: 206px; bottom: 2px; display: flex; flex-direction: column; border: 1px solid #1b1b1b; border-width: 1px 2px 6px 1px; background: #cbcbcb; }
.dlg-head { height: 20px; flex: none; display: flex; justify-content: space-between; padding-left: 5px; background: linear-gradient(#8a8a8a 0, #555 7px, #1b1b1b 7px); color: #fff; }
.dlg-head h2 { line-height: 19px; font-weight: 700; }
.dlg-head button { width: 19px; border-left: 1px solid #777; display: grid; place-items: center; }
.dlg-head svg { width: 16px; height: 16px; }
.dlg-head path { stroke: #fff; stroke-width: 2; }
.dlg-name { padding: 12px 18px; border-bottom: 1px solid #b0b0b0; }
.dlg-name label { display: block; padding-left: 3px; }
.name-box { position: relative; max-width: 383px; }
.name-box i { position: absolute; left: 103px; top: 3px; width: 1px; height: 13px; background: #000; }
input, select { font: inherit; color: #000; margin: 0; border-radius: 0; }
.name-box input { display: block; width: 100%; height: 18px; padding: 0 3px; border: 1px solid #8c8c8c; background: #fff; }
.dlg-main { flex: 1; display: flex; }
.kinds { display: flex; flex-direction: column; gap: 12px; padding: 12px 18px; border-right: 1px solid #b0b0b0; }
.kind { width: 96px; height: 96px; padding-top: 12px; display: flex; flex-direction: column; align-items: center; border: 1px solid #8c8c8c; border-top-width: 2px; border-radius: 2px; background: linear-gradient(#f4f4f4, #d0d0d0 43%, #c0c0c0 44%, #e8e8e8); line-height: 14px; box-shadow: inset 1px 1px #fff; }
.kind.picked { background: #fff; }
.kind svg { width: 48px; height: 44px; overflow: visible; }
.kind text { font: 700 16px "Noto Sans", sans-serif; text-anchor: end; fill: #000; stroke: #fff; stroke-width: 2px; paint-order: stroke; }
.kind span { height: 28px; display: grid; place-items: center; }
.form { flex: 1; display: flex; flex-direction: column; gap: 6px; padding: 12px 21px 6px; }
.row { height: 18px; display: flex; align-items: center; }
.row + .row:not(.tight) { margin-top: 6px; }
.row > :first-child { width: 109px; flex: none; }
.combo, .spin { position: relative; width: 138px; height: 18px; }
.row .combo, .row .spin { flex: none; }
.combo select, .spin input { display: block; width: 100%; height: 18px; padding: 0 4px; appearance: none; border: 1px solid #7088c0; background: #fff; line-height: 15px; }
.combo svg, .spin svg { position: absolute; right: 1px; top: 1px; width: 16px; height: 16px; border-left: 1px solid #7088c0; background: linear-gradient(#f4f4f4, #cfcfcf); pointer-events: none; }
.spin input { border-color: #8c8c8c; background: #c8c8c8; color: #8c8c8c; }
.spin svg { border-color: #8c8c8c; background: #dcdcdc; }
input[type=radio], input[type=checkbox] { appearance: none; width: 15px; height: 15px; flex: none; border: 1px solid #707070; background: linear-gradient(#fff, #d4d4d4); display: grid; place-items: center; }
input[type=radio] { border-radius: 50%; }
input[type=checkbox] { border-radius: 2px; }
.row input + label { margin-left: 4px; }
input[type=radio]:checked { border-color: #284c78; background: radial-gradient(#083878 0 2px, #d8f4ff 3px, #40b8e8 6px); }
input[type=checkbox]:checked { border-color: #1c6ca8; background: linear-gradient(#d4f4ff, #58c8f0); }
input[type=checkbox]:checked::after { content: ""; width: 5px; height: 9px; margin-bottom: 2px; border: solid #083c88; border-width: 0 2px 2px 0; transform: rotate(45deg); }
.fs { width: 18px; height: 18px; margin-left: 26px; }
.more { margin-top: auto; align-self: flex-start; color: #0808f0; text-decoration: none; }
.more-info { height: 23px; border-top: 1px solid #a8a8a8; }
.dlg-foot { height: 44px; flex: none; display: flex; align-items: center; padding: 0 12px; border-bottom: 3px solid #747474; background: #b0b0b0; }
.dlg-foot label { margin-left: 4px; margin-right: auto; }
.btn { width: 90px; height: 20px; margin-left: 12px; line-height: 16px; border: 1px solid #8c8c8c; background: linear-gradient(#fafafa, #dadada 45%, #c6c6c6 50%, #e4e4e4); box-shadow: inset 0 0 0 1px #aaa; }
.btn.ok { border-color: #208c20 #8c9c8c #8c9c8c; background: linear-gradient(#f0fcf0, #a8dca0 45%, #70c068 50%, #c8f4c0); box-shadow: inset 0 1px #208c20; }

.marks { position: absolute; inset: 0; width: 100%; height: 100%; pointer-events: none; }
.marks ellipse, .marks circle { fill: none; stroke: #f00; stroke-width: 8; }
.marks text { fill: #f02020; font: 16px "Liberation Sans", sans-serif; }
```
